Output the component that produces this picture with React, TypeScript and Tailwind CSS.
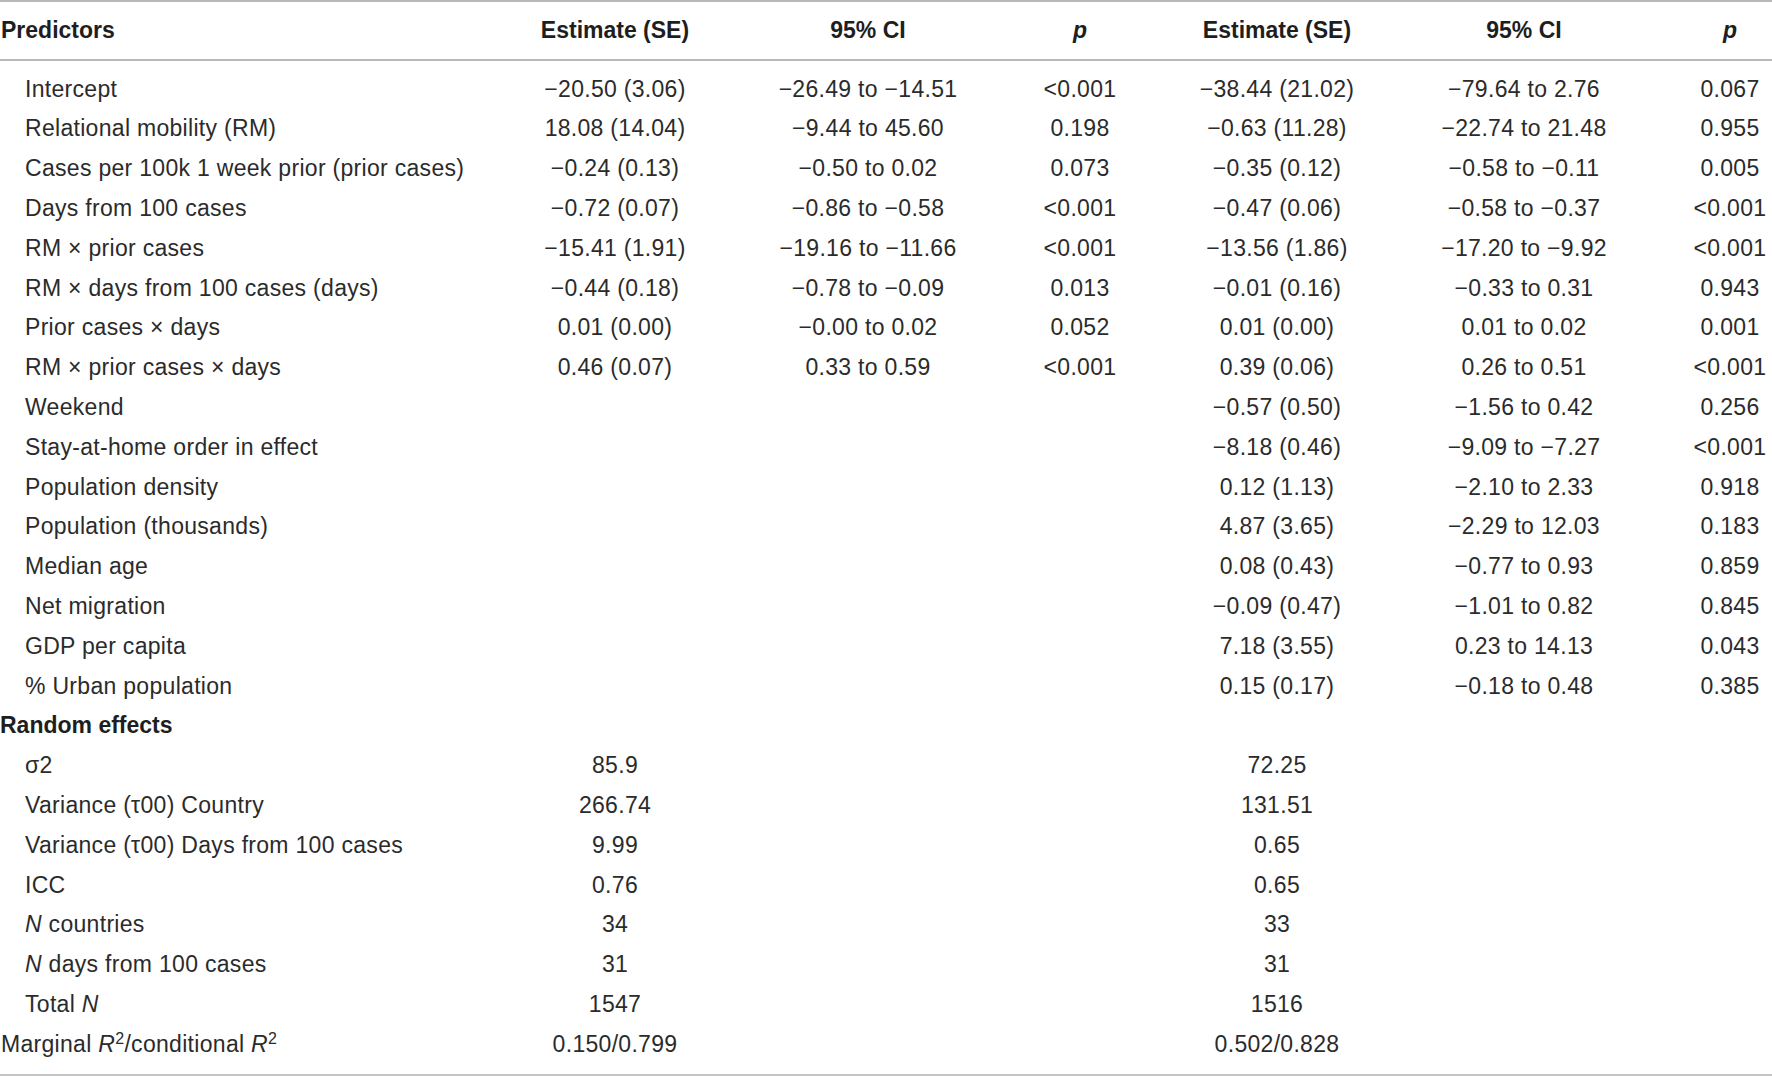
import React from "react";

const M = "\u2212";
const X = "\u00d7";

const fixed: string[][] = [
  ["Intercept", `${M}20.50 (3.06)`, `${M}26.49 to ${M}14.51`, "<0.001", `${M}38.44 (21.02)`, `${M}79.64 to 2.76`, "0.067"],
  ["Relational mobility (RM)", "18.08 (14.04)", `${M}9.44 to 45.60`, "0.198", `${M}0.63 (11.28)`, `${M}22.74 to 21.48`, "0.955"],
  ["Cases per 100k 1 week prior (prior cases)", `${M}0.24 (0.13)`, `${M}0.50 to 0.02`, "0.073", `${M}0.35 (0.12)`, `${M}0.58 to ${M}0.11`, "0.005"],
  ["Days from 100 cases", `${M}0.72 (0.07)`, `${M}0.86 to ${M}0.58`, "<0.001", `${M}0.47 (0.06)`, `${M}0.58 to ${M}0.37`, "<0.001"],
  [`RM ${X} prior cases`, `${M}15.41 (1.91)`, `${M}19.16 to ${M}11.66`, "<0.001", `${M}13.56 (1.86)`, `${M}17.20 to ${M}9.92`, "<0.001"],
  [`RM ${X} days from 100 cases (days)`, `${M}0.44 (0.18)`, `${M}0.78 to ${M}0.09`, "0.013", `${M}0.01 (0.16)`, `${M}0.33 to 0.31`, "0.943"],
  [`Prior cases ${X} days`, "0.01 (0.00)", `${M}0.00 to 0.02`, "0.052", "0.01 (0.00)", "0.01 to 0.02", "0.001"],
  [`RM ${X} prior cases ${X} days`, "0.46 (0.07)", "0.33 to 0.59", "<0.001", "0.39 (0.06)", "0.26 to 0.51", "<0.001"],
  ["Weekend", "", "", "", `${M}0.57 (0.50)`, `${M}1.56 to 0.42`, "0.256"],
  ["Stay-at-home order in effect", "", "", "", `${M}8.18 (0.46)`, `${M}9.09 to ${M}7.27`, "<0.001"],
  ["Population density", "", "", "", "0.12 (1.13)", `${M}2.10 to 2.33`, "0.918"],
  ["Population (thousands)", "", "", "", "4.87 (3.65)", `${M}2.29 to 12.03`, "0.183"],
  ["Median age", "", "", "", "0.08 (0.43)", `${M}0.77 to 0.93`, "0.859"],
  ["Net migration", "", "", "", `${M}0.09 (0.47)`, `${M}1.01 to 0.82`, "0.845"],
  ["GDP per capita", "", "", "", "7.18 (3.55)", "0.23 to 14.13", "0.043"],
  ["% Urban population", "", "", "", "0.15 (0.17)", `${M}0.18 to 0.48`, "0.385"],
];

const Sup = () => <sup className="text-[16px] relative -top-[8px] align-baseline">2</sup>;

const random: { label: React.ReactNode; a: string; b: string; indent?: boolean }[] = [
  { label: "\u03c32", a: "85.9", b: "72.25", indent: true },
  { label: "Variance (\u03c400) Country", a: "266.74", b: "131.51", indent: true },
  { label: "Variance (\u03c400) Days from 100 cases", a: "9.99", b: "0.65", indent: true },
  { label: "ICC", a: "0.76", b: "0.65", indent: true },
  { label: (<><i>N</i> countries</>), a: "34", b: "33", indent: true },
  { label: (<><i>N</i> days from 100 cases</>), a: "31", b: "31", indent: true },
  { label: (<>Total <i>N</i></>), a: "1547", b: "1516", indent: true },
  {
    label: (
      <>
        Marginal <i>R</i><Sup />/conditional <i>R</i><Sup />
      </>
    ),
    a: "0.150/0.799",
    b: "0.502/0.828",
  },
];

const grid = "grid grid-cols-[497px_236px_270px_154px_240px_254px_121px] items-center";

export default function App() {
  return (
    <div
      className="w-[1772px] h-[1076px] bg-white text-[#2b2b2b] text-[23px] tracking-[0.3px] overflow-hidden"
      style={{ fontFamily: '"Liberation Sans", Arial, sans-serif' }}
    >
      <div className="border-t-2 border-b-2 border-[#b8b8b8]">
        <div className={`${grid} h-[57px] font-bold text-[#1e1e1e] tracking-[0px]`}>
          <div className="pl-[1px]">Predictors</div>
          <div className="text-center">Estimate (SE)</div>
          <div className="text-center">95% CI</div>
          <div className="text-center italic">p</div>
          <div className="text-center">Estimate (SE)</div>
          <div className="text-center">95% CI</div>
          <div className="text-center italic pl-[37px]">p</div>
        </div>
      </div>
      <div className="pt-[8px] pb-[10px] border-b-[2px] border-[#c4c4c4]">
        {fixed.map((r, i) => (
          <div key={i} className={`${grid} h-[39.8px] whitespace-nowrap`}>
            <div className="pl-[25px]">{r[0]}</div>
            <div className="text-center">{r[1]}</div>
            <div className="text-center">{r[2]}</div>
            <div className="text-center">{r[3]}</div>
            <div className="text-center">{r[4]}</div>
            <div className="text-center">{r[5]}</div>
            <div className="text-center pl-[37px]">{r[6]}</div>
          </div>
        ))}
        <div className={`${grid} h-[39.8px]`}>
          <div className="font-bold text-[#1e1e1e] tracking-[0px]">Random effects</div>
        </div>
        {random.map((r, i) => (
          <div key={i} className={`${grid} h-[39.8px] whitespace-nowrap`}>
            <div className={r.indent ? "pl-[25px]" : "pl-[1px]"}>{r.label}</div>
            <div className="text-center">{r.a}</div>
            <div />
            <div />
            <div className="text-center">{r.b}</div>
            <div />
            <div />
          </div>
        ))}
      </div>
    </div>
  );
}
